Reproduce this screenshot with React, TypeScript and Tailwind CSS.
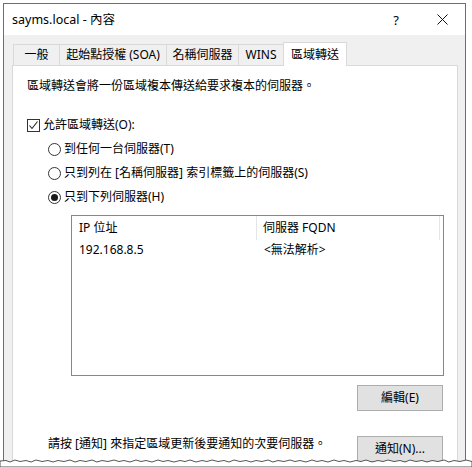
import React from "react";

const font = { fontFamily: '"Noto Sans", "Noto Sans CJK TC", sans-serif' };

const tabs = [
  { label: "一般", w: "w-[47px]" },
  { label: "起始點授權 (SOA)", w: "w-[108px]" },
  { label: "名稱伺服器", w: "w-[73px]" },
  { label: "WINS", w: "w-[46px]" },
];

const Radio = ({ checked, label }: { checked?: boolean; label: string }) => (
  <div className="flex h-[24px] items-center pl-[21px]">
    <span className="flex h-[13px] w-[13px] items-center justify-center rounded-full border border-[#333] bg-white">
      {checked && <span className="h-[7px] w-[7px] rounded-full bg-[#1a1a1a]" />}
    </span>
    <span className="ml-[3px]">{label}</span>
  </div>
);

export default function App() {
  return (
    <div
      className="relative h-[467px] w-[472px] overflow-hidden bg-white text-[12px] leading-[16px] text-black"
      style={font}
    >
      <div className="ml-[3px] mt-[3px] h-[480px] w-[463px] border border-[#6e6e6e] bg-[#f0f0f0]">
        {/* title bar */}
        <div className="flex h-[31px] items-center bg-white">
          <span className="pl-[8px] text-[12.5px]">sayms.local - 內容</span>
          <div className="ml-auto flex h-full">
            <div className="flex w-[46px] items-center justify-center text-[13px]">?</div>
            <div className="flex w-[46px] items-center justify-center">
              <svg width="11" height="11" viewBox="0 0 11 11">
                <path d="M0.5 0.5 L10.5 10.5 M10.5 0.5 L0.5 10.5" stroke="#111" strokeWidth="1" />
              </svg>
            </div>
          </div>
        </div>

        {/* tabs */}
        <div className="ml-[9px] mt-[7px] flex h-[23px] items-end">
          {tabs.map((t) => (
            <div
              key={t.label}
              className={`${t.w} -mr-px flex h-[21px] items-center justify-center border border-b-0 border-[#d9d9d9] bg-[#f0f0f0]`}
            >
              {t.label}
            </div>
          ))}
          <div className="relative z-10 -mb-px flex h-[24px] w-[64px] items-center justify-center border border-b-0 border-[#d9d9d9] bg-white">
            區域轉送
          </div>
        </div>

        {/* panel */}
        <div className="ml-[8px] h-[420px] w-[446px] border border-[#d9d9d9] bg-white pl-[14px]">
          <div className="mt-[12px]">區域轉送會將一份區域複本傳送給要求複本的伺服器。</div>

          <div className="mt-[19px] flex h-[24px] items-center">
            <span className="flex h-[13px] w-[13px] items-center justify-center border border-[#333] bg-white">
              <svg width="11" height="11" viewBox="0 0 11 11">
                <path d="M1.5 5.5 L4 8.5 L9.5 1.5" fill="none" stroke="#222" strokeWidth="1.1" />
              </svg>
            </span>
            <span className="ml-[3px]">允許區域轉送(O):</span>
          </div>
          <Radio label="到任何一台伺服器(T)" />
          <Radio label="只到列在 [名稱伺服器] 索引標籤上的伺服器(S)" />
          <Radio checked label="只到下列伺服器(H)" />

          {/* list */}
          <div className="ml-[44px] mt-[6px] h-[161px] w-[373px] border border-[#828790] bg-white">
            <div className="flex h-[24px] items-center">
              <div className="flex h-full w-[185px] items-center border-r border-[#e5e5e5] pl-[7px]">IP 位址</div>
              <div className="flex h-full w-[183px] items-center border-r border-[#e5e5e5] pl-[6px]">伺服器 FQDN</div>
            </div>
            <div className="flex h-[20px] items-center">
              <div className="w-[186px] pl-[7px]">192.168.8.5</div>
              <div className="pl-[6px]">&lt;無法解析&gt;</div>
            </div>
          </div>

          <div className="mt-[9px] flex justify-end pr-[14px]">
            <button className="h-[26px] w-[86px] border border-[#adadad] bg-[#e1e1e1]">編輯(E)</button>
          </div>

          <div className="mt-[25px] flex items-start pr-[14px]">
            <span className="ml-[21px]">請按 [通知] 來指定區域更新後要通知的次要伺服器。</span>
            <button className="ml-auto h-[26px] w-[86px] border border-[#adadad] bg-[#e1e1e1]">通知(N)...</button>
          </div>
        </div>
      </div>

      {/* torn bottom edge */}
      <svg
        className="absolute bottom-0 left-0"
        width="472"
        height="8"
        viewBox="0 0 472 8"
      >
        <path
          d="M0 2 L6 1.5 L10 3 L15 1 L20 2.5 L26 1.5 L31 3 L36 1 L42 2.5 L48 1.5 L53 3 L58 1.5 L64 2.5 L70 1 L75 3 L80 1.5 L86 2.5 L92 1 L97 3 L102 1.5 L108 2.5 L114 1 L119 2.5 L124 1.5 L130 3 L136 1 L141 2.5 L146 1.5 L152 3 L158 1 L163 2.5 L168 1.5 L174 3 L180 1.5 L185 2.5 L190 1 L196 3 L202 1.5 L207 2.5 L212 1 L218 2.5 L224 1.5 L229 3 L234 1 L240 2.5 L246 1.5 L251 3 L256 1.5 L262 2.5 L268 1 L273 3 L278 1.5 L284 2.5 L290 1 L295 2.5 L300 1.5 L306 3 L312 1 L317 2.5 L322 1.5 L328 3 L334 1 L339 2.5 L344 1.5 L350 3 L356 1.5 L361 2.5 L366 1 L372 3 L378 1.5 L383 2.5 L388 1 L394 2.5 L400 1.5 L405 3 L410 1 L416 2.5 L422 1.5 L427 3 L432 1.5 L438 2.5 L444 1 L449 3 L454 1.5 L460 2.5 L466 1 L472 2.5 L472 8 L0 8 Z"
          fill="white"
          stroke="#555"
          strokeWidth="1"
        />
      </svg>
    </div>
  );
}
